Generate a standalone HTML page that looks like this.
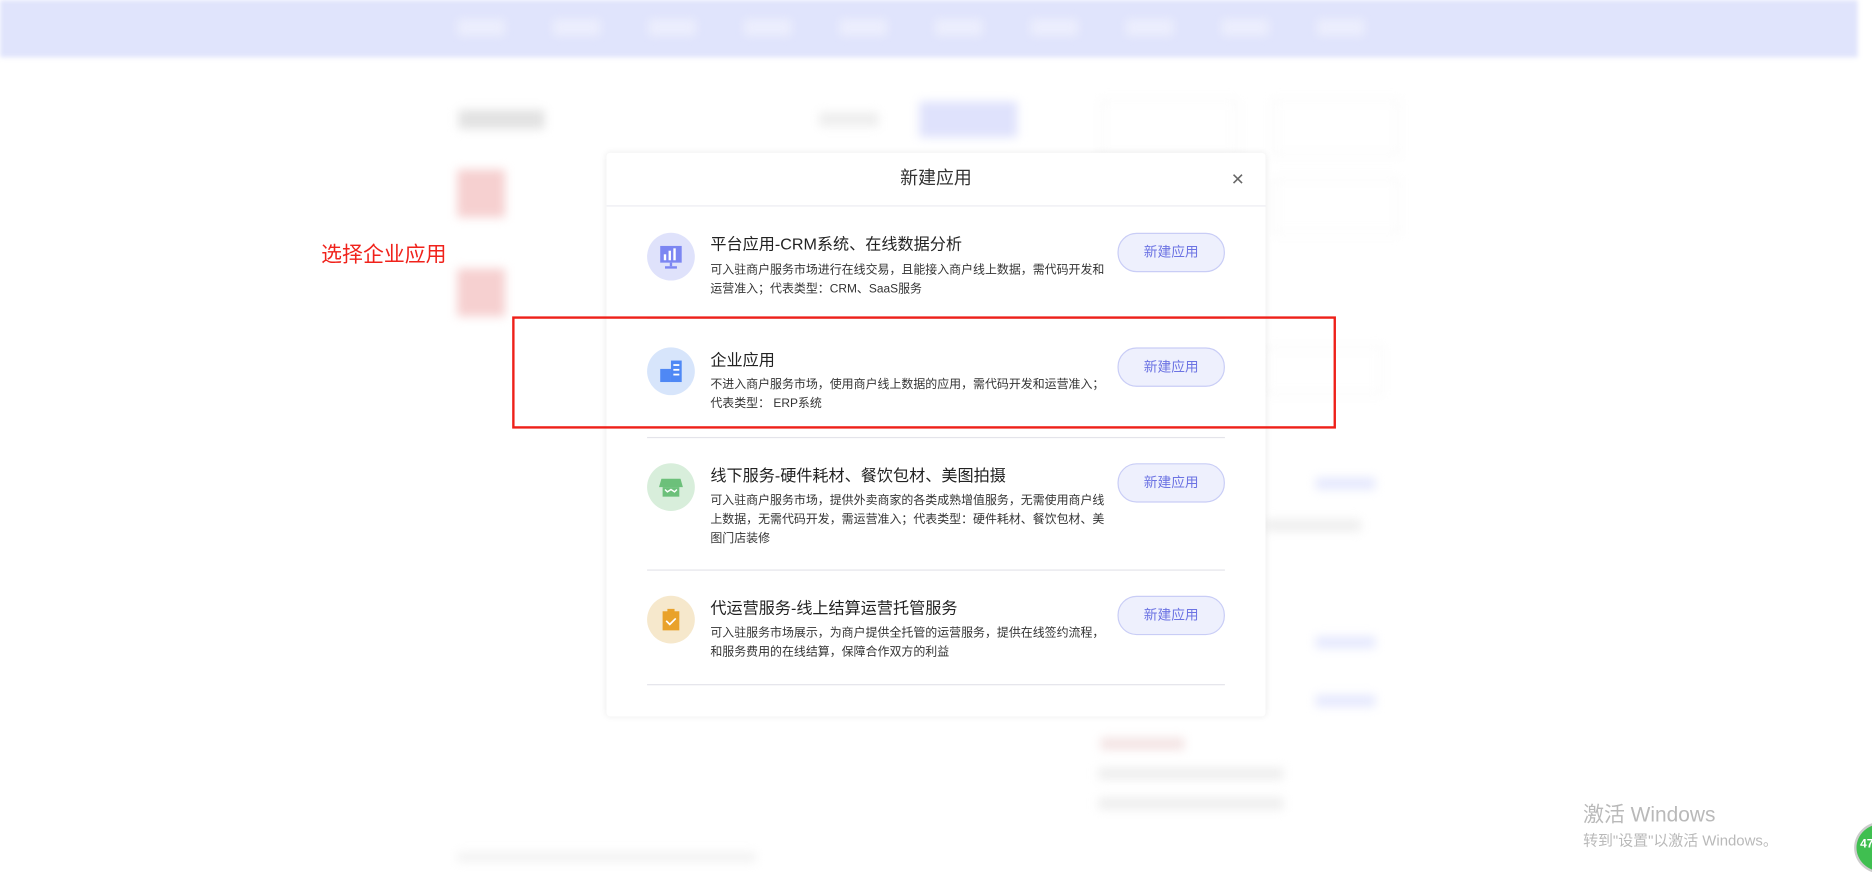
<!DOCTYPE html>
<html><head><meta charset="utf-8"><style>
html,body{margin:0;padding:0;width:1872px;height:869px;overflow:hidden;background:#fff;font-family:"Liberation Sans","Noto Sans CJK SC",sans-serif;}
#st{position:absolute;left:0;top:0;width:1568px;height:728px;transform:scale(1.19388);transform-origin:0 0;}
.a{position:absolute;}
.bl{filter:blur(4px);}
.modal{position:absolute;left:508px;top:128px;width:552px;height:472px;background:#fff;border-radius:3px;box-shadow:0 0 6px rgba(0,0,0,.08);}
.hd{height:44px;border-bottom:1px solid #ececf2;text-align:center;line-height:44px;font-size:15px;color:#333;}
.x{position:absolute;right:18px;top:12px;font-size:18px;color:#666;line-height:20px;}
.sep{position:absolute;left:34px;width:484px;height:1px;background:#e4e4ea;}
.ic{position:absolute;left:34px;width:40px;height:40px;border-radius:50%;}
.t{position:absolute;left:87px;font-size:13.5px;color:#222;white-space:nowrap;}
.d{position:absolute;left:87px;width:336px;font-size:10px;line-height:15.8px;color:#333;}
.b{position:absolute;left:428px;width:88px;height:31px;border:1px solid #c9cdf6;background:#eef0fd;border-radius:16px;text-align:center;line-height:33px;font-size:11.5px;color:#6c73e3;}
</style></head><body><div id="st">
<div class="a" style="left:0;top:0;width:1556px;height:48px;background:#e0e4fc;filter:blur(2px)"></div>
<div class="a bl" style="left:383px;top:16px;width:780px;height:14px;background:repeating-linear-gradient(90deg,#eceefd 0 40px,transparent 40px 80px)"></div>
<div class="a bl" style="left:384px;top:92px;width:72px;height:16px;background:#e2e2e2"></div>
<div class="a bl" style="left:686px;top:94px;width:50px;height:12px;background:#eee"></div>
<div class="a bl" style="left:770px;top:85px;width:82px;height:30px;background:#dfe2fc"></div>
<div class="a bl" style="left:922px;top:84px;width:112px;height:44px;border:1px solid #eee"></div>
<div class="a bl" style="left:1066px;top:84px;width:104px;height:44px;border:1px solid #eee"></div>
<div class="a bl" style="left:1066px;top:150px;width:104px;height:44px;border:1px solid #eee"></div>
<div class="a bl" style="left:383px;top:142px;width:40px;height:40px;background:#f6d0d0"></div>
<div class="a bl" style="left:383px;top:225px;width:40px;height:40px;background:#f6d0d0"></div>
<div class="a bl" style="left:1060px;top:290px;width:96px;height:38px;border:1px solid #eee"></div>
<div class="a bl" style="left:1102px;top:400px;width:50px;height:10px;background:#e5e8fd"></div>
<div class="a bl" style="left:1060px;top:435px;width:80px;height:10px;background:#eee"></div>
<div class="a bl" style="left:1102px;top:533px;width:50px;height:10px;background:#e5e8fd"></div>
<div class="a bl" style="left:1102px;top:582px;width:50px;height:10px;background:#e5e8fd"></div>
<div class="a bl" style="left:922px;top:618px;width:70px;height:10px;background:#f3e3e3"></div>
<div class="a bl" style="left:920px;top:643px;width:155px;height:10px;background:#eee"></div>
<div class="a bl" style="left:920px;top:668px;width:155px;height:10px;background:#eee"></div>
<div class="a bl" style="left:383px;top:714px;width:250px;height:8px;background:#f2f2f2"></div>
<div class="a" style="left:269px;top:200px;font-size:17.5px;color:#f0221b">选择企业应用</div>
<div class="modal">
<div class="hd">新建应用</div><div class="x">×</div>

<div class="ic" style="top:67px;background:#dfe2fb"><svg width="40" height="40"><rect x="11" y="11" width="18" height="14" fill="#7c86f2"/><rect x="14" y="18" width="2" height="5" fill="#fff"/><rect x="18" y="15" width="2" height="8" fill="#fff"/><rect x="22" y="13" width="2" height="10" fill="#fff"/><rect x="19" y="25" width="2" height="3" fill="#7c86f2"/><rect x="15" y="28" width="10" height="2" fill="#7c86f2"/></svg></div>
<div class="t" style="top:65px">平台应用-CRM系统、在线数据分析</div>
<div class="d" style="top:91px">可入驻商户服务市场进行在线交易，且能接入商户线上数据，需代码开发和运营准入；代表类型：CRM、SaaS服务</div>
<div class="b" style="top:67px">新建应用</div>
<div class="sep" style="top:138px"></div>

<div class="ic" style="top:163px;background:#d7e5fb"><svg width="40" height="40"><rect x="20" y="11" width="9" height="18" fill="#4f88f5"/><rect x="11" y="18" width="9" height="11" fill="#4f88f5"/><rect x="22" y="14" width="5" height="1.5" fill="#fff"/><rect x="22" y="18" width="5" height="1.5" fill="#fff"/><rect x="22" y="22" width="5" height="1.5" fill="#fff"/></svg></div>
<div class="t" style="top:162px">企业应用</div>
<div class="d" style="top:187px;width:332px">不进入商户服务市场，使用商户线上数据的应用，需代码开发和运营准入；<br>代表类型： ERP系统</div>
<div class="b" style="top:163px">新建应用</div>
<div class="sep" style="top:238px"></div>

<div class="ic" style="top:260px;background:#d8eedb"><svg width="40" height="40"><path d="M12 13h16l2 7H10z" fill="#6cc07a"/><rect x="13" y="20" width="14" height="8" fill="#6cc07a"/><path d="M15 22l2 2 3-2 3 2 2-2" stroke="#fff" fill="none" stroke-width="1.2"/></svg></div>
<div class="t" style="top:259px">线下服务-硬件耗材、餐饮包材、美图拍摄</div>
<div class="d" style="top:284px">可入驻商户服务市场，提供外卖商家的各类成熟增值服务，无需使用商户线上数据，无需代码开发，需运营准入；代表类型：硬件耗材、餐饮包材、美图门店装修</div>
<div class="b" style="top:260px">新建应用</div>
<div class="sep" style="top:349px"></div>

<div class="ic" style="top:371px;background:#f6e8cc"><svg width="40" height="40"><rect x="13" y="13" width="14" height="16" fill="#e9a22b"/><rect x="17" y="11" width="6" height="3" fill="#e9a22b"/><path d="M16 21l3 3 5-5" stroke="#fff" fill="none" stroke-width="1.4"/></svg></div>
<div class="t" style="top:370px">代运营服务-线上结算运营托管服务</div>
<div class="d" style="top:395px">可入驻服务市场展示，为商户提供全托管的运营服务，提供在线签约流程，和服务费用的在线结算，保障合作双方的利益</div>
<div class="b" style="top:371px">新建应用</div>
<div class="sep" style="top:445px"></div>
</div>
<div class="a" style="left:429px;top:265px;width:686px;height:90px;border:2px solid #ee2019"></div>
<div class="a" style="left:1326px;top:669px;font-size:17.5px;color:#b9b9b9">激活 Windows</div>
<div class="a" style="left:1326px;top:693px;font-size:12.5px;color:#b9b9b9">转到"设置"以激活 Windows。</div>
<div class="a" style="left:1553px;top:688px;width:40px;height:40px;border-radius:50%;background:#3fbf50;border:2px solid #ccc;color:#fff;font-size:10px;font-weight:bold;line-height:36px;padding-left:3px">47</div>
</div></body></html>
